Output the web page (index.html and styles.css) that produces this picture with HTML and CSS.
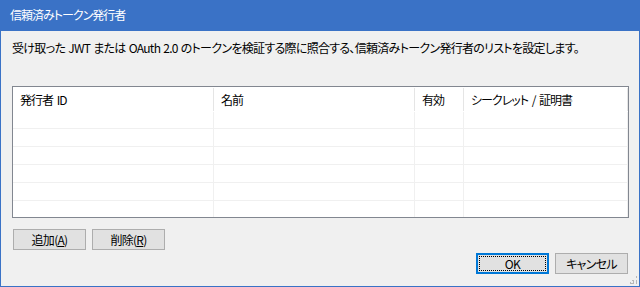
FILE: index.html
```html
<!DOCTYPE html>
<html lang="ja">
<head>
<meta charset="UTF-8" />
<title>信頼済みトークン発行者</title>
<link rel="stylesheet" href="styles.css">
</head>
<body>
<div class="window">
  <div class="titlebar">信頼済みトークン発行者</div>
  <div class="client">
    <p class="desc">受け取った JWT または OAuth 2.0 のトークンを検証する際に照合する、信頼済みトークン発行者のリストを設定します。</p>
    <div class="list">
      <div class="list-head">
        <div class="col c1">発行者 ID</div>
        <div class="col c2">名前</div>
        <div class="col c3">有効</div>
        <div class="col c4">シークレット / 証明書</div>
      </div>
      <div class="list-body">
        <div class="row"><div class="cell c1"></div><div class="cell c2"></div><div class="cell c3"></div><div class="cell c4"></div></div>
        <div class="row"><div class="cell c1"></div><div class="cell c2"></div><div class="cell c3"></div><div class="cell c4"></div></div>
        <div class="row"><div class="cell c1"></div><div class="cell c2"></div><div class="cell c3"></div><div class="cell c4"></div></div>
        <div class="row"><div class="cell c1"></div><div class="cell c2"></div><div class="cell c3"></div><div class="cell c4"></div></div>
        <div class="row"><div class="cell c1"></div><div class="cell c2"></div><div class="cell c3"></div><div class="cell c4"></div></div>
        <div class="row"><div class="cell c1"></div><div class="cell c2"></div><div class="cell c3"></div><div class="cell c4"></div></div>
      </div>
    </div>
    <div class="list-buttons">
      <button class="btn">追加(<u>A</u>)</button>
      <button class="btn">削除(<u>R</u>)</button>
    </div>
    <div class="dialog-buttons">
      <button class="btn default"><span class="focus">OK</span></button>
      <button class="btn">キャンセル</button>
    </div>
    <div class="grip"></div>
  </div>
</div>
</body>
</html>
```
FILE: styles.css
```css
html, body { margin: 0; padding: 0; }
body { font-family: "Noto Sans CJK JP", "Noto Sans", sans-serif; font-size: 12px; color: #000; font-feature-settings: "palt"; letter-spacing: -0.7px; word-spacing: 1px; }
.window { width: 640px; height: 287px; box-sizing: border-box; border: 1px solid #3a72c6; border-top: 0; background: #f0f0f0; display: flex; flex-direction: column; }
.titlebar { height: 31px; margin: 0 -1px; background: #3a72c6; color: #fff; font-size: 12px; line-height: 30px; padding-left: 10px; letter-spacing: -1px; }
.client { flex: 1; position: relative; padding: 0 11px; }
.desc { margin: 9px 0 0; line-height: 16px; height: 16px; white-space: nowrap; }
.list { margin-top: 30px; width: 617px; height: 132px; box-sizing: border-box; border: 1px solid #828790; background: #fff; overflow: hidden; }
.list-head { display: flex; height: 25px; }
.list-head .col { box-sizing: border-box; padding-left: 7px; line-height: 25px; position: relative; white-space: nowrap; letter-spacing: -1px; word-spacing: 2px; }
.list-head .col::after { content: ""; position: absolute; right: 0; top: 1px; bottom: 1px; width: 1px; background: #e5e5e5; }
.c1 { width: 201px; }
.c2 { width: 201px; }
.c3 { width: 49px; }
.c4 { width: 164px; }
.row { display: flex; height: 17px; border-bottom: 1px solid #f0f0f0; }
.row:first-child { height: 16px; }
.cell { box-sizing: border-box; border-right: 1px solid #f0f0f0; }
.list-buttons { display: flex; gap: 6px; margin-top: 11px; padding-left: 1px; }
.btn { width: 73px; height: 21px; box-sizing: border-box; border: 1px solid #adadad; background: #e1e1e1; font: inherit; letter-spacing: inherit; word-spacing: inherit; color: #000; padding: 0; line-height: 17px; }
.btn u { text-decoration: underline; }
.dialog-buttons { display: flex; justify-content: flex-end; gap: 6px; margin-top: 3px; }
.btn.default { border: 2px solid #0078d7; padding: 1px; }
.focus { display: block; height: 100%; box-sizing: border-box; border: 1px dotted #000; line-height: 13px; }
.grip { position: absolute; right: 2px; bottom: 2px; width: 8px; height: 8px;
  background:
    radial-gradient(circle, #b8b8b8 1px, transparent 1px) 6px 0 / 3px 3px no-repeat,
    radial-gradient(circle, #b8b8b8 1px, transparent 1px) 3px 3px / 3px 3px no-repeat,
    radial-gradient(circle, #b8b8b8 1px, transparent 1px) 6px 3px / 3px 3px no-repeat,
    radial-gradient(circle, #b8b8b8 1px, transparent 1px) 0 6px / 3px 3px no-repeat,
    radial-gradient(circle, #b8b8b8 1px, transparent 1px) 3px 6px / 3px 3px no-repeat,
    radial-gradient(circle, #b8b8b8 1px, transparent 1px) 6px 6px / 3px 3px no-repeat; }
```
